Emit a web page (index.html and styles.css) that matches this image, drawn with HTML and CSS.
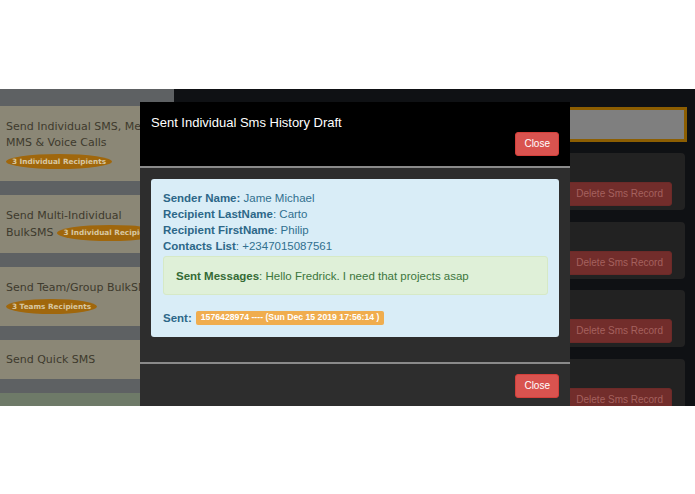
FILE: index.html
```html
<!DOCTYPE html>
<html>
<head>
<meta charset="utf-8">
<link rel="stylesheet" href="styles.css">
</head>
<body>
<div class="frame">
  <aside class="sidebar">
    <div class="s-card">
      <div class="s-line">Send Individual SMS, Messaging</div>
      <div class="s-line">MMS &amp; Voice Calls</div>
      <span class="pill">3 Individual Recipients</span>
    </div>
    <div class="s-card">
      <div class="s-line">Send Multi-Individual</div>
      <div class="s-row"><span>BulkSMS</span><span class="pill inline">3 Individual Recipients</span></div>
    </div>
    <div class="s-card">
      <div class="s-line">Send Team/Group BulkSMS</div>
      <span class="pill">3 Teams Recipients</span>
    </div>
    <div class="s-card short">
      <div class="s-line">Send Quick SMS</div>
    </div>
    <div class="s-card green"></div>
  </aside>
  <main class="main">
    <div class="search"></div>
    <div class="records">
      <div class="record"><button class="btn-del">Delete Sms Record</button></div>
      <div class="record"><button class="btn-del">Delete Sms Record</button></div>
      <div class="record"><button class="btn-del">Delete Sms Record</button></div>
      <div class="record"><button class="btn-del">Delete Sms Record</button></div>
    </div>
  </main>
  <div class="modal">
    <div class="modal-header">
      <h4 class="modal-title">Sent Individual Sms History Draft</h4>
      <button class="btn-close">Close</button>
    </div>
    <div class="modal-body">
      <div class="info">
        <div class="row"><b>Sender Name:</b> Jame Michael</div>
        <div class="row"><b>Recipient LastName</b>: Carto</div>
        <div class="row"><b>Recipient FirstName</b>: Philip</div>
        <div class="row"><b>Contacts List</b>: +2347015087561</div>
        <div class="success"><b>Sent Messages</b>: Hello Fredrick. I need that projects asap</div>
        <div class="sent"><b>Sent:</b> <span class="label">1576428974 ---- (Sun Dec 15 2019 17:56:14 )</span></div>
      </div>
    </div>
    <div class="modal-footer">
      <button class="btn-close">Close</button>
    </div>
  </div>
</div>
</body>
</html>
```

FILE: styles.css
```css
html, body {
  margin: 0;
  padding: 0;
  background: #ffffff;
}

.frame {
  position: relative;
  margin-top: 89px;
  height: 317px;
  overflow: hidden;
  display: flex;
  font-family: "Liberation Sans", Arial, sans-serif;
}

/* ---------- sidebar ---------- */
.sidebar {
  width: 174px;
  flex: none;
  background: #5e6163;
  padding-top: 17px;
  display: flex;
  flex-direction: column;
  gap: 14px;
  box-sizing: border-box;
}

.s-card {
  background: #8b8776;
  padding: 13px 6px 12px;
  font-family: "DejaVu Sans", sans-serif;
  font-size: 11px;
  line-height: 16px;
  color: #3e3a2d;
}

.s-card.short {
  padding: 12px 6px 11px;
}

.s-card.green {
  background: #6e7a68;
  height: 40px;
  padding: 0;
}

.s-line {
  max-width: 134px;
  overflow: hidden;
  white-space: nowrap;
}

.s-row {
  max-width: 134px;
  overflow: hidden;
  display: flex;
  align-items: center;
  gap: 4px;
  height: 17px;
  white-space: nowrap;
}

.pill {
  display: block;
  width: fit-content;
  margin-top: 3px;
  height: 15px;
  line-height: 15px;
  padding: 0 6px;
  border-radius: 50%;
  background: #a0670c;
  color: #d8c7a2;
  font-family: "DejaVu Sans", sans-serif;
  font-weight: bold;
  font-size: 7.3px;
  white-space: nowrap;
}

.pill.inline {
  display: inline-block;
  flex: none;
  margin-top: 0;
  height: 16px;
  line-height: 16px;
}

/* ---------- main ---------- */
.main {
  flex: 1;
  background: #0f1114;
  padding: 18px 8px 0 12px;
}

.search {
  height: 35px;
  box-sizing: border-box;
  border: 3px solid #8c5e02;
  background: #7f7f7f;
}

.records {
  margin-top: 11px;
  display: flex;
  flex-direction: column;
  gap: 11.5px;
  margin-right: 2px;
}

.record {
  height: 57px;
  box-sizing: border-box;
  background: #222222;
  border-radius: 4px;
  padding: 29px 13px 4px;
  display: flex;
  justify-content: flex-end;
  align-items: flex-start;
}

.btn-del {
  height: 24px;
  padding: 0 8px;
  border: 1px solid #6c2a28;
  border-radius: 3px;
  background: #722d2b;
  color: #a5615e;
  font-family: "Liberation Sans", Arial, sans-serif;
  font-size: 10px;
  line-height: 22px;
}

/* ---------- modal ---------- */
.modal {
  position: absolute;
  left: 140px;
  top: 13px;
  width: 430px;
}

.modal-header {
  background: #000000;
  padding: 13px 11px 10px;
  display: flex;
  flex-direction: column;
  border-bottom: 2px solid #8a8a8a;
}

.modal-title {
  margin: 0;
  font-weight: normal;
  font-size: 13px;
  line-height: 16px;
  color: #ffffff;
}

.btn-close {
  align-self: flex-end;
  margin-top: 1px;
  height: 24px;
  padding: 0 8px;
  border: 1px solid #d43f3a;
  border-radius: 3px;
  background: #d9534f;
  color: #ffffff;
  font-family: "Liberation Sans", Arial, sans-serif;
  font-size: 10px;
  line-height: 22px;
}

.modal-body {
  background: #2d2d2d;
  padding: 11px 11px 25px;
}

.info {
  background: #d9edf7;
  border-radius: 3px;
  padding: 11px 11px 11px 12px;
  color: #31708f;
  font-size: 11.5px;
  line-height: 16px;
}

.info b {
  color: #2c6788;
}

.success {
  margin-top: 2px;
  background: #dff0d8;
  border: 1px solid #d6e9c6;
  border-radius: 3px;
  padding: 11px 12px 10px;
  color: #3c763d;
}

.success b {
  color: #346a35;
}

.sent {
  margin-top: 15px;
  display: flex;
  align-items: center;
  gap: 4px;
}

.label {
  display: inline-block;
  background: #f0ad4e;
  color: #ffffff;
  font-weight: bold;
  font-size: 8.7px;
  line-height: 9px;
  padding: 2px 5px 2.5px;
  border-radius: 2px;
  white-space: nowrap;
}

.modal-footer {
  background: #2d2d2d;
  border-top: 2px solid #8a8a8a;
  padding: 10px 11px;
  display: flex;
  flex-direction: column;
}

.modal-footer .btn-close {
  margin-top: 0;
}
```
